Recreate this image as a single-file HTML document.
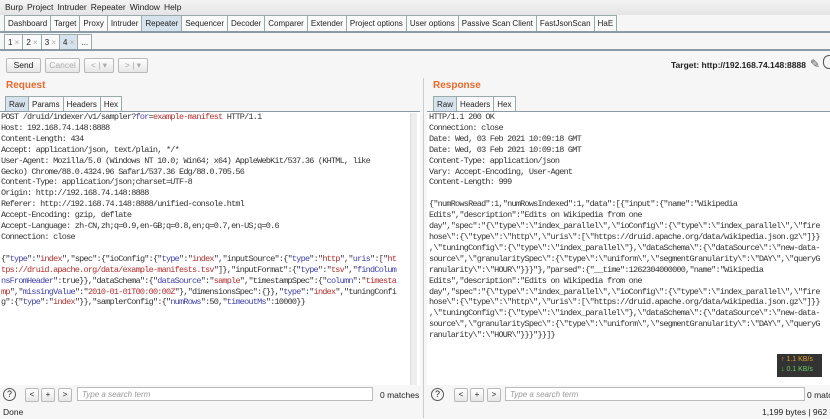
<!DOCTYPE html>
<html><head><meta charset="utf-8"><style>
*{margin:0;padding:0;box-sizing:border-box}
body{width:830px;height:419px;overflow:hidden;background:#f6f6f6;font-family:"Liberation Sans",sans-serif;font-size:8.5px;color:#222;position:relative}
.a{position:absolute}
.menu{top:0;left:0;width:830px;height:15px;background:linear-gradient(#f4f4f4,#e4e4e4);padding:2px 0 0 5px;font-size:8.5px}
.menu span{margin-right:4px}
.tabs{top:15px;left:4px;height:17px;display:flex}
.tab{border:1px solid #9aa;border-bottom:none;background:#fafafa;padding:3px 3px 0;height:16px;margin-right:-1px;font-size:8px;white-space:nowrap}
.tab.on{background:#d7e3ec}
.line{left:0;width:830px;height:2px;background:#8a9aa6}
.btn{border:1px solid #b9b9b9;border-radius:2px;background:linear-gradient(#fff,#e6e6e6);text-align:center;font-size:8.5px}
.org{color:#e8692a;font-weight:bold;font-size:10px}
.ed{background:#fff;border-top:1px solid #8a9aa6}
pre{font-family:"Liberation Mono",monospace;font-size:8.5px;letter-spacing:-0.76px;line-height:10.9px;color:#333;white-space:pre}
.k{color:#3f3fa8}.v{color:#b03030}
.search{border:1px solid #bbb;background:#fff;height:14px;font-style:italic;color:#999;padding:2px 4px;font-size:8px}
.sb{width:14px;height:14px;font-size:8px;line-height:12px}
</style></head><body>
<div class="a menu"><span>Burp</span><span>Project</span><span>Intruder</span><span>Repeater</span><span>Window</span><span>Help</span></div>
<div class="a tabs"><div class="tab">Dashboard</div><div class="tab">Target</div><div class="tab">Proxy</div><div class="tab">Intruder</div><div class="tab on">Repeater</div><div class="tab">Sequencer</div><div class="tab">Decoder</div><div class="tab">Comparer</div><div class="tab">Extender</div><div class="tab">Project options</div><div class="tab">User options</div><div class="tab">Passive Scan Client</div><div class="tab">FastJsonScan</div><div class="tab">HaE</div></div>
<div class="a line" style="top:31px;height:2px"></div>
<div class="a tabs" style="top:34px"><div class="tab">1 <span style="color:#aaa">×</span></div><div class="tab">2 <span style="color:#aaa">×</span></div><div class="tab">3 <span style="color:#aaa">×</span></div><div class="tab on">4 <span style="color:#aaa">×</span></div><div class="tab">...</div></div>
<div class="a line" style="top:49px;height:2px"></div>
<div class="a btn" style="left:6px;top:58px;width:35px;height:15px;line-height:13px">Send</div>
<div class="a btn" style="left:45px;top:58px;width:35px;height:15px;line-height:13px;color:#aaa">Cancel</div>
<div class="a btn" style="left:84px;top:58px;width:30px;height:15px;line-height:13px;color:#aaa">&lt; | ▾</div>
<div class="a btn" style="left:118px;top:58px;width:30px;height:15px;line-height:13px;color:#aaa">&gt; | ▾</div>
<div class="a" style="left:671px;top:60px;font-weight:bold;font-size:8.5px;white-space:nowrap">Target: http://192.168.74.148:8888</div>
<div class="a" style="left:810px;top:57px;font-size:12px;color:#555">✎</div>
<div class="a" style="left:823px;top:55px;width:12px;height:14px;border:1px solid #555;border-radius:7px"></div>
<div class="a org" style="left:6px;top:80px">Request</div>
<div class="a org" style="left:433px;top:80px">Response</div>
<div class="a tabs" style="left:5px;top:96px"><div class="tab on">Raw</div><div class="tab">Params</div><div class="tab">Headers</div><div class="tab">Hex</div></div>
<div class="a tabs" style="left:433px;top:96px"><div class="tab on">Raw</div><div class="tab">Headers</div><div class="tab">Hex</div></div>
<div class="a" style="left:423px;top:78px;width:1px;height:340px;background:#ccc"></div>
<div class="a ed" style="left:0;top:111px;width:420px;height:274px"><pre style="padding:0 0 0 1px">POST /druid/indexer/v1/sampler?<span class="k">for</span>=<span class="v">example-manifest</span> HTTP/1.1
Host: 192.168.74.148:8888
Content-Length: 434
Accept: application/json, text/plain, */*
User-Agent: Mozilla/5.0 (Windows NT 10.0; Win64; x64) AppleWebKit/537.36 (KHTML, like
Gecko) Chrome/88.0.4324.96 Safari/537.36 Edg/88.0.705.56
Content-Type: application/json;charset=UTF-8
Origin: http://192.168.74.148:8888
Referer: http://192.168.74.148:8888/unified-console.html
Accept-Encoding: gzip, deflate
Accept-Language: zh-CN,zh;q=0.9,en-GB;q=0.8,en;q=0.7,en-US;q=0.6
Connection: close

{"<span class="k">type</span>":"<span class="v">index</span>","spec":{"ioConfig":{"<span class="k">type</span>":"<span class="v">index</span>","inputSource":{"<span class="k">type</span>":"<span class="v">http</span>","<span class="k">uris</span>":["<span class="v">ht</span>
<span class="v">tps://druid.apache.org/data/example-manifests.tsv</span>"]},"inputFormat":{"<span class="k">type</span>":"<span class="v">tsv</span>","<span class="k">findColum</span>
<span class="k">nsFromHeader</span>":true}},"dataSchema":{"<span class="k">dataSource</span>":"<span class="v">sample</span>","timestampSpec":{"<span class="k">column</span>":"<span class="v">timesta</span>
<span class="v">mp</span>","<span class="k">missingValue</span>":"<span class="v">2010-01-01T00:00:00Z</span>"},"dimensionsSpec":{}},"<span class="k">type</span>":"<span class="v">index</span>","tuningConfi
g":{"<span class="k">type</span>":"<span class="v">index</span>"}},"samplerConfig":{"<span class="k">numRows</span>":50,"<span class="k">timeoutMs</span>":10000}}</pre>
<div class="a" style="right:3px;top:1px;width:7px;height:272px;background:#eee;border-left:1px solid #ddd"></div></div>
<div class="a ed" style="left:427px;top:111px;width:403px;height:274px"><pre style="padding:0 0 0 2px">HTTP/1.1 200 OK
Connection: close
Date: Wed, 03 Feb 2021 10:09:18 GMT
Date: Wed, 03 Feb 2021 10:09:18 GMT
Content-Type: application/json
Vary: Accept-Encoding, User-Agent
Content-Length: 999

{"numRowsRead":1,"numRowsIndexed":1,"data":[{"input":{"name":"Wikipedia
Edits","description":"Edits on Wikipedia from one
day","spec":"{\"type\":\"index_parallel\",\"ioConfig\":{\"type\":\"index_parallel\",\"fire
hose\":{\"type\":\"http\",\"uris\":[\"https://druid.apache.org/data/wikipedia.json.gz\"]}}
,\"tuningConfig\":{\"type\":\"index_parallel\"},\"dataSchema\":{\"dataSource\":\"new-data-
source\",\"granularitySpec\":{\"type\":\"uniform\",\"segmentGranularity\":\"DAY\",\"queryG
ranularity\":\"HOUR\"}}}"},"parsed":{"__time":1262304000000,"name":"Wikipedia
Edits","description":"Edits on Wikipedia from one
day","spec":"{\"type\":\"index_parallel\",\"ioConfig\":{\"type\":\"index_parallel\",\"fire
hose\":{\"type\":\"http\",\"uris\":[\"https://druid.apache.org/data/wikipedia.json.gz\"]}}
,\"tuningConfig\":{\"type\":\"index_parallel\"},\"dataSchema\":{\"dataSource\":\"new-data-
source\",\"granularitySpec\":{\"type\":\"uniform\",\"segmentGranularity\":\"DAY\",\"queryG
ranularity\":\"HOUR\"}}}"}}]}</pre></div>
<div class="a" style="left:777px;top:354px;width:45px;height:23px;background:#333;font-size:7px;line-height:10px;padding:1px 4px"><div style="color:#e0a030">↑ 1.1 KB/s</div><div style="color:#6c6">↓ 0.1 KB/s</div></div>
<div class="a" style="left:3px;top:388px;width:13px;height:13px;border:1px solid #555;border-radius:7px;text-align:center;font-size:9px;line-height:11px">?</div>
<div class="a btn sb" style="left:25px;top:388px">&lt;</div>
<div class="a btn sb" style="left:41px;top:388px">+</div>
<div class="a btn sb" style="left:58px;top:388px">&gt;</div>
<div class="a search" style="left:77px;top:387px;width:296px">Type a search term</div>
<div class="a" style="left:380px;top:390px;font-size:8.5px;white-space:nowrap">0 matches</div>
<div class="a" style="left:431px;top:388px;width:13px;height:13px;border:1px solid #555;border-radius:7px;text-align:center;font-size:9px;line-height:11px">?</div>
<div class="a btn sb" style="left:454px;top:388px">&lt;</div>
<div class="a btn sb" style="left:470px;top:388px">+</div>
<div class="a btn sb" style="left:487px;top:388px">&gt;</div>
<div class="a search" style="left:505px;top:387px;width:300px">Type a search term</div>
<div class="a" style="left:807px;top:390px;font-size:8.5px;white-space:nowrap">0 matches</div>
<div class="a" style="left:3px;top:407px;font-size:8.5px">Done</div>
<div class="a" style="left:762px;top:407px;font-size:8.5px;white-space:nowrap">1,199 bytes | 962 ms</div>
</body></html>
